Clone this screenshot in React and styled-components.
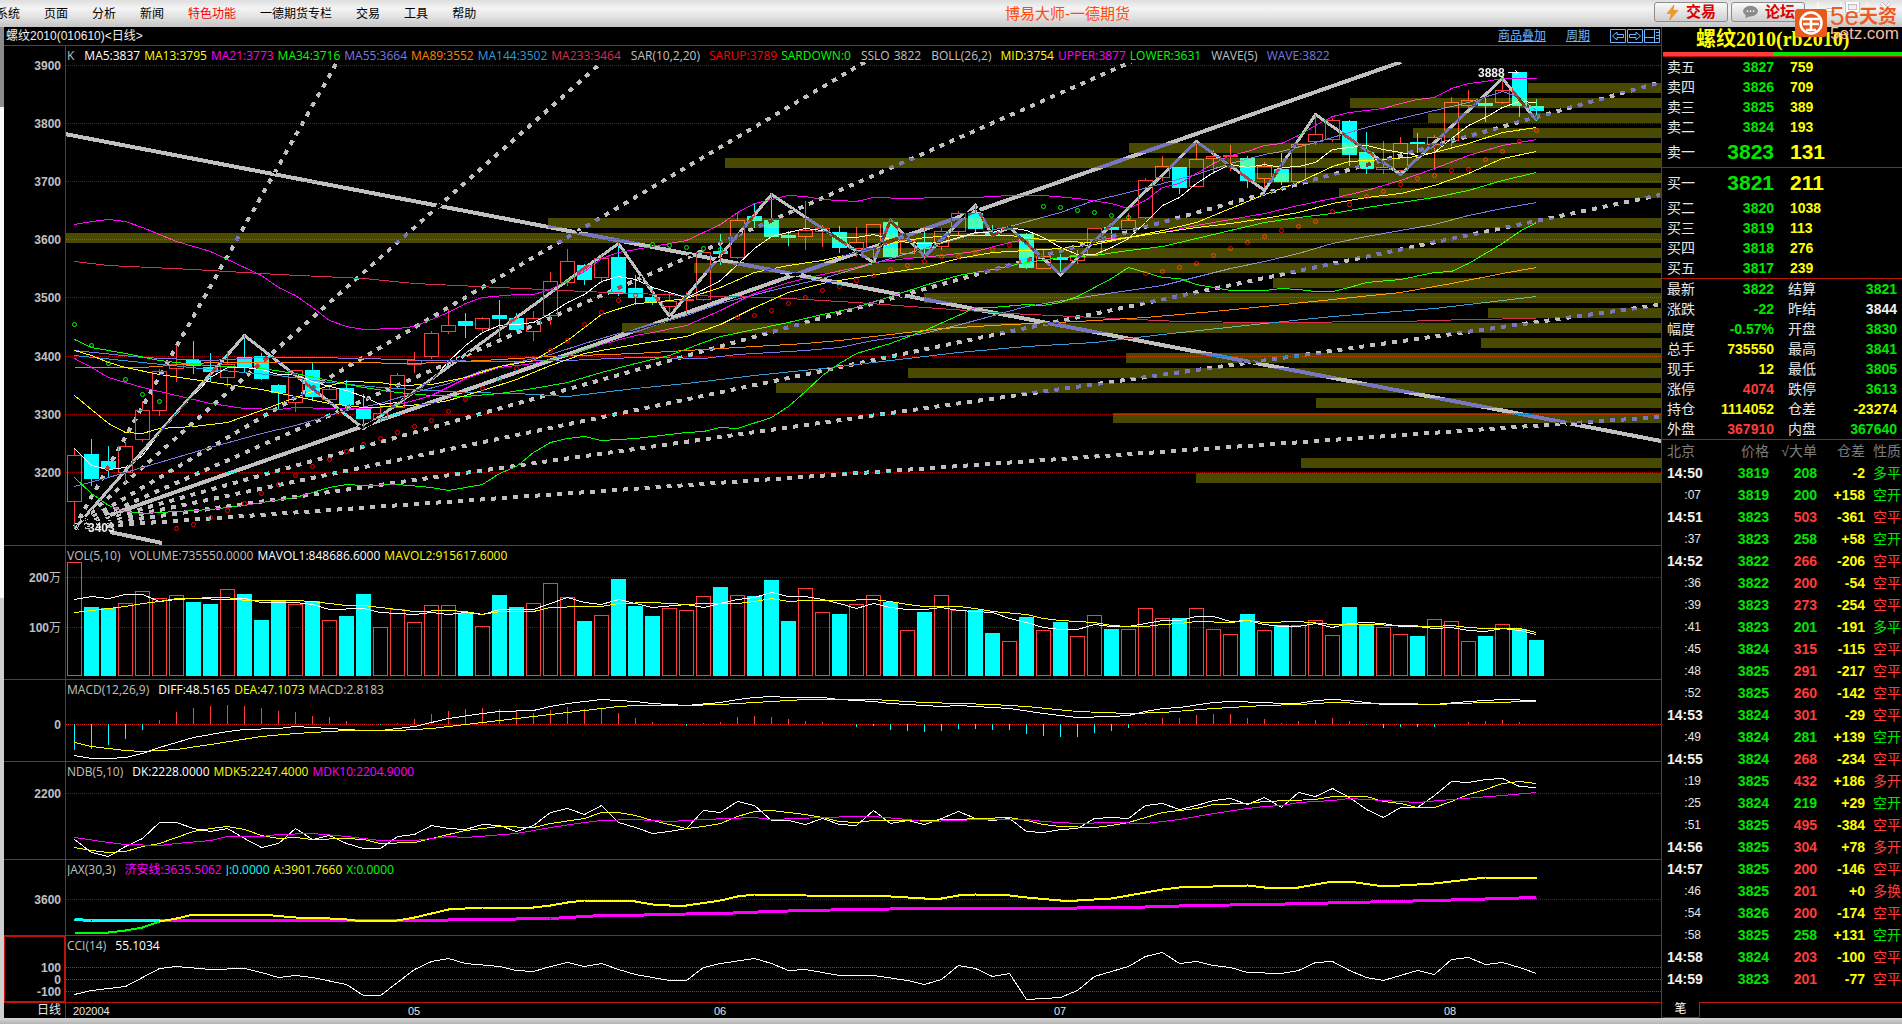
import React from "react";
import styled, { createGlobalStyle } from "styled-components";

const CJK = '"Liberation Sans", "Noto Sans CJK SC", sans-serif';
const INFO = '"Open Sans", "Noto Sans CJK SC", sans-serif';

const C = {
  rule: "#c0140a",
  up: "#ff3c3c",
  down: "#00ffff",
  green: "#00e600",
  lime: "#00ff00",
  yellow: "#ffff00",
  magenta: "#ff00ff",
  blue: "#7878e6",
  orange: "#ff8000",
  azure: "#309cd8",
  crimson: "#d82c50",
  grey: "#c0c0c0",
  white: "#ffffff",
  red: "#ff0000",
};

const GlobalStyle = createGlobalStyle`
  * { box-sizing: border-box; }
  body { margin: 0; background: #000; overflow-x: hidden; font-family: ${CJK}; }
`;

/* ---------- shell ---------- */
const Page = styled.div`
  position: relative;
  display: flex;
  flex-direction: column;
  min-height: 100vh;
  background: #000;
`;
const MenuBar = styled.header`
  display: flex;
  align-items: center;
  height: 27px;
  overflow: hidden;
  background: linear-gradient(#dedede 0, #f4f4f4 30%, #e4e4e4 60%, #c4c4c4 100%);
`;
const Menu = styled.nav`
  display: flex;
  gap: 24px;
  margin-left: -4px;
`;
const MenuItem = styled.button`
  padding: 0;
  border: 0;
  background: none;
  font: 12px/18px ${CJK};
  white-space: nowrap;
  color: ${(p) => (p.$hot ? C.red : "#000")};
`;
const AppTitle = styled.h1`
  flex: 1;
  margin: 0;
  padding-left: 5px;
  text-align: center;
  font: 15px/24px ${CJK};
  color: #ff4a10;
`;
const BarActions = styled.div`
  display: flex;
  gap: 3px;
  height: 27px;
  padding-top: 2px;
`;
const ActionButton = styled.button`
  display: flex;
  align-items: center;
  gap: 7px;
  width: 74px;
  height: 20px;
  padding: 0 9px 0 11px;
  border: 1px solid #8c8c8c;
  border-radius: 3px;
  background: linear-gradient(#fafafa, #cfcfcf);
  font: bold 15px/18px ${CJK};
  color: #dc0000;
  white-space: nowrap;
`;
const WindowButtons = styled.svg`
  display: block;
  width: 94px;
  height: 24px;
`;
const Brand = styled.div`
  position: absolute;
  top: 6px;
  right: 0;
  display: flex;
  gap: 2px;
  width: 107px;
`;
const BrandMark = styled.svg`
  flex: none;
  width: 33px;
  height: 34px;
`;
const BrandText = styled.div`
  color: #f05a22;
  white-space: nowrap;
`;
const BrandTop = styled.div`
  display: flex;
  align-items: center;
  height: 21px;
  font: 26px/21px ${CJK};
  b {
    font-size: 19px;
  }
`;
const BrandBottom = styled.div`
  font: 17px/14px ${CJK};
  color: #f4bca8;
`;

const Workspace = styled.main`
  flex: 1;
  display: grid;
  grid-template-columns: 4px minmax(0, 1fr) 240px;
`;
const Gutter = styled.div`
  background: linear-gradient(#8c8c8c 0 80px, #fafaf6 80px 571px, #cfcfcf 571px);
`;
const StatusStrip = styled.footer`
  height: 6px;
  background: linear-gradient(#d6d6d6, #b4b4b4);
`;

/* ---------- chart column ---------- */
const ChartColumn = styled.section`
  display: flex;
  flex-direction: column;
  border-right: 1px solid ${C.rule};
`;
const ChartHeader = styled.div`
  display: flex;
  align-items: center;
  height: 19px;
  padding: 0 1px 0 2px;
  border-bottom: 1px solid ${C.rule};
  font: 12px/18px ${CJK};
  color: #f0f0f0;
`;
const HeaderLinks = styled.div`
  display: flex;
  align-items: center;
  gap: 20px;
  margin-left: auto;
`;
const HeaderLink = styled.a`
  color: #6cb4ff;
  text-decoration: underline;
`;
const HeaderIcons = styled.svg`
  display: block;
  width: 50px;
  height: 16px;
`;
const Panel = styled.div`
  display: grid;
  grid-template-columns: 62px minmax(0, 1fr);
  grid-template-rows: minmax(0, 1fr);
  height: ${(p) => p.$h}px;
  border-bottom: 1px solid ${C.rule};
`;
const AxisCell = styled.div`
  min-height: 0;
  border-right: 1px solid ${C.rule};
  box-shadow: ${(p) => (p.$active ? `inset 0 0 0 1px ${C.rule}` : "none")};
`;
const AxisSvg = styled.svg`
  display: block;
  width: 61px;
  height: 100%;
  font: bold 12px ${CJK};
  fill: ${C.grey};
`;
const PlotCell = styled.div`
  display: flex;
  flex-direction: column;
  min-width: 0;
  min-height: 0;
`;
const InfoRow = styled.div`
  display: flex;
  flex: none;
  gap: 4px;
  height: 16px;
  padding-left: 1px;
  font: 12px/20px ${INFO};
  white-space: nowrap;
`;
const Info = styled.span`
  color: ${(p) => p.$c};
  margin-left: ${(p) => (p.$lead ? 6 : 0)}px;
  margin-right: ${(p) => (p.$name ? 5 : 0)}px;
`;
const PlotFrame = styled.div`
  flex: 1;
  min-height: 0;
  overflow: hidden;
`;
const PlotSvg = styled.svg`
  display: block;
  width: 100%;
  height: 100%;
  isolation: isolate;
  shape-rendering: crispEdges;
  font: bold 12px ${CJK};
`;
const DrawnLine = styled.path`
  fill: none;
  stroke: ${C.grey};
  stroke-width: ${(p) => p.$w}px;
  stroke-dasharray: ${(p) => (p.$dash ? "5 6" : "none")};
  mix-blend-mode: difference;
`;
const TimeRow = styled.div`
  display: grid;
  grid-template-columns: 62px minmax(0, 1fr);
  height: 15px;
  font: 11px/15px ${CJK};
  color: #e6e6e6;
`;
const Period = styled.div`
  border-right: 1px solid ${C.rule};
  padding-right: 4px;
  text-align: right;
  font-size: 12px;
`;
const TimeSvg = styled.svg`
  display: block;
  width: 100%;
  height: 15px;
  fill: #e6e6e6;
`;

/* ---------- quote column ---------- */
const QuoteColumn = styled.aside`
  display: flex;
  flex-direction: column;
  font: bold 14px/20px ${CJK};
`;
const Contract = styled.h2`
  margin: 0;
  height: 25px;
  padding-left: 34px;
  font: bold 20px/25px "Liberation Serif", "Noto Sans CJK SC", serif;
  color: ${C.yellow};
  white-space: nowrap;
`;
const Ratio = styled.div`
  height: 5px;
  margin-left: 1px;
  border-bottom: 1px solid ${C.rule};
  background: linear-gradient(to right, ${C.up} 46%, ${C.green} 46%);
`;
const QuoteTable = styled.table`
  width: 100%;
  table-layout: fixed;
  border-collapse: separate;
  border-spacing: 0;
  border-bottom: ${(p) => (p.$rule ? `1px solid ${C.rule}` : "0")};
`;
const Row = styled.tr`
  height: ${(p) => p.$h}px;
`;
const Label = styled.th`
  width: ${(p) => p.$w}px;
  padding: 0 0 0 ${(p) => p.$pl || 5}px;
  text-align: left;
  font-weight: normal;
  white-space: nowrap;
  color: #e6e6e6;
`;
const Cell = styled.td`
  width: ${(p) => (p.$w ? `${p.$w}px` : "auto")};
  padding: 0 ${(p) => p.$pr || 0}px 0 ${(p) => p.$pl || 0}px;
  text-align: ${(p) => (p.$left ? "left" : "right")};
  font-size: ${(p) => (p.$big ? 21 : 14)}px;
  white-space: nowrap;
  color: ${(p) => p.$c};
`;
const HeadCell = styled.th`
  width: ${(p) => p.$w}px;
  padding: 0 0 0 ${(p) => p.$pl || 0}px;
  text-align: ${(p) => (p.$left ? "left" : "right")};
  font-weight: normal;
  white-space: nowrap;
  color: #7c7c7c;
`;
const Minute = styled.td`
  padding: 0 0 0 5px;
  color: #f0f0f0;
`;
const Second = styled.td`
  padding: 0 9px 0 0;
  text-align: right;
  font-size: 12px;
  font-weight: normal;
  color: #e6e6e6;
`;
const Nature = styled.td`
  padding: 0 0 0 8px;
  font-weight: normal;
  white-space: nowrap;
  overflow: hidden;
  color: ${(p) => p.$c};
`;
const TabRow = styled.div`
  display: flex;
  height: 16px;
  margin-top: auto;
`;
const Tab = styled.button`
  width: 38px;
  height: 16px;
  padding: 0;
  border: 1px solid ${C.rule};
  border-width: 0 1px 1px 0;
  border-radius: 0 0 2px 2px;
  background: #000;
  font: 12px/15px ${CJK};
  color: #fff;
`;
const TabRest = styled.div`
  flex: 1;
  border-top: 1px solid ${C.rule};
`;

/* ---------- data ---------- */
/* kind, high, body top, body bottom, low */
const CANDLES = `r 449 455 501 528|c 439 454 479 486|c 446 461 469 477|r 442 446 472 483|r 401 410 439 442|r 369 371 410 416|r 345 364 368 382|c 341 360 366 374|c 353 367 372 381|r 351 364 377 387|c 335 357 367 372|c 353 356 379 380|c 384 385 393 409|r 370 370 402 412|c 363 370 397 399|r 386 389 399 400|c 380 388 405 410|c 394 409 419 429|r 403 413 418 422|r 373 375 407 407|r 352 360 364 373|r 331 333 356 359|r 309 325 331 334|c 313 321 326 338|r 317 318 328 332|c 300 315 319 337|c 313 318 330 332|r 311 318 331 341|r 272 281 315 325|r 249 261 282 286|c 264 265 280 285|r 255 258 277 283|c 243 257 294 296|c 275 288 298 305|c 287 297 302 305|r 292 301 306 315|r 292 299 300 314|r 251 252 299 301|c 234 251 254 265|r 212 220 257 259|c 203 216 221 228|c 193 220 237 237|c 231 235 238 246|r 201 230 236 250|r 225 228 231 247|c 226 232 248 253|r 227 242 248 257|r 224 224 248 263|c 219 222 257 257|r 240 240 253 253|c 228 242 249 256|r 228 231 246 250|r 211 213 231 235|c 205 213 229 232|c 225 232 235 237|r 226 228 229 230|c 233 234 268 269|r 250 256 268 268|c 254 258 260 274|r 250 255 260 264|r 228 228 254 254|c 225 227 230 239|r 213 220 229 229|r 178 180 217 219|r 156 166 177 181|c 167 167 188 194|r 142 159 186 186|r 150 156 158 174|r 145 155 156 171|c 156 158 181 188|r 162 166 178 188|c 153 169 182 185|r 144 144 181 184|r 115 134 141 145|r 118 120 139 142|c 120 121 155 166|c 132 152 169 174|r 141 167 169 174|r 137 143 170 173|c 133 142 144 153|r 135 137 144 170|r 97 102 140 146|r 90 100 105 109|c 96 103 106 122|r 78 90 102 104|c 72 72 106 117|c 99 106 111 121`
  .split("|")
  .map((s) => {
    const [kind, ...v] = s.split(" ");
    return [kind, ...v.map(Number)];
  });

/* "index:y index:y ..." */
const pts = (s, f = (v) => v) =>
  s.trim().split(/\s+/).map((p) => {
    const [i, v] = p.split(":").map(Number);
    return [i, f(v)];
  });
const run = (start, s) => s.split(" ").map((v, k) => [start + k, Number(v)]);

const LINES = [
  [C.crimson, "0:261 2:265 7:269 12:274 17:278 20:283 25:287 30:291 33:293 36:295 41:297 46:302 50:307 55:313 60:317 65:321 70:322 78:321 82:319 86:318"],
  [C.azure, "0:355 4:362 8:369 12:375 15:382 18:387 20:389 23:392 26:393 29:396 33:388 36:383 40:375 44:368 48:360 52:352 56:346 60:342 64:334 70:323 74:316 80:308 83:302 86:296"],
  [C.orange, "0:367 4:367 8:362 12:362 16:362 20:363 24:360 28:356 33:353 38:348 43:343 45:340 47:336 51:328 55:324 59:321 63:317 67:311 70:306 74:299 78:292 81:283 84:273 86:267"],
  [C.blue, "0:350 4:357 8:360 11:357 14:357 17:358 21:360 25:361 29:360 33:357 37:358 39:354 43:350 45:347 47:340 50:333 53:320 56:306 60:295 64:285 68:268 70:261 72:253 74:243 76:236 78:230 80:224 82:215 84:208 86:202"],
  [C.blue, "0:486 2:477 5:462 8:447 11:433 13:425 15:415 16:410 18:403 20:392 22:383 24:370 26:362 28:354 30:343 32:333 33:330 34:325 36:315 38:303 41:290 44:278 47:263 50:248 53:233 55:226 58:212 60:200 62:192 64:183 66:174 68:163 70:154 71:151 73:142 74:137 76:127 78:118 80:110 82:102 84:91 85:97 86:110"],
  [C.lime, "0:339 1:347 3:353 5:360 7:364 9:366 11:368 13:373 15:380 17:387 19:392 21:395 23:396 25:393 27:388 29:382 31:372 33:363 35:355 37:342 38:336 40:329 42:322 44:314 46:307 48:296 50:285 52:275 54:269 56:262 58:257 60:255 62:250 64:246 66:238 68:230 70:222 72:217 74:213 76:207 78:202 80:197 82:190 84:180 86:172"],
  [C.lime, "0:477 1:493 2:505 3:511 4:513 6:511 8:509 10:505 11:502 13:497 15:487 16:484 17:485 19:484 21:487 22:490 24:484 25:473 26:466 27:452 28:442 29:438 30:436 31:440 33:438 36:432 37:431 38:427 39:428 41:417 42:406 43:391 44:375 45:363 46:353 48:343 50:330 52:315 53:307 54:307 56:304 57:305 58:302 59:296 60:287 61:278 62:267 63:272 64:277 65:278 66:284 67:287 68:290 70:290 71:288 72:289 73:291 74:291 75:287 76:282 78:279 80:272 81:271 82:263 83:253 84:243 85:231 86:222"],
  [C.magenta, "0:358 1:367 2:377 4:387 6:395 8:403 10:408 12:409 13:407 15:408 17:408 18:407 19:404 20:400 21:395 23:378 25:367 27:363 29:355 31:344 33:335 34:332 36:325 38:310 40:293 42:282 44:274 46:267 47:262 49:258 51:255 53:251 55:242 56:239 58:239 60:239 62:237 64:232 66:225 68:219 70:213 72:205 74:198 76:190 78:180 80:168 82:155 84:145 86:139"],
  [C.magenta, "0:224 1:221 2:219 3:221 4:227 6:241 8:251 10:267 11:275 12:287 13:295 14:307 15:320 16:326 17:329 19:328 20:326 21:319 22:312 23:303 24:297 26:294 27:294 28:289 29:280 30:271 31:258 32:252 33:249 34:246 36:240 37:232 38:224 39:212 40:203 41:199 42:195 43:196 44:199 46:201 47:197 49:198 51:197 53:197 55:195 57:195 59:198 61:203 62:208 63:200 64:187 65:183 66:173 67:163 68:155 69:151 70:145 71:143 72:135 73:125 74:116 75:112 77:108 78:103 79:99 80:97 81:88 82:83 83:81 84:78 85:78 86:78"],
  [C.yellow, "0:350 1:355 2:362 3:367 5:374 7:379 9:384 11:389 13:396 15:403 17:407 19:406 21:403 22:400 23:395 24:390 26:379 28:365 30:353 32:347 33:344 36:336 38:324 40:307 42:292 44:283 46:277 48:272 50:267 52:258 54:252 56:250 58:248 60:244 62:237 64:232 66:227 68:223 70:218 72:212 74:203 76:197 78:193 80:185 82:173 84:158 86:151"],
  [C.yellow, "0:395 2:423 3:432 4:433 5:428 7:426 9:422 11:410 13:397 15:385 16:381 18:382 19:385 21:384 23:377 25:366 27:360 28:350 29:340 30:327 31:314 33:303 34:302 36:298 38:287 40:272 42:265 44:260 46:252 48:243 50:237 52:235 54:235 55:235 56:237 58:241 60:242 62:237 64:230 66:222 68:208 70:194 72:182 74:166 75:161 77:159 79:156 80:152 82:143 84:132 86:127"],
  [C.white, "0:448 1:465 2:469 3:467 4:455 5:433 6:413 7:395 8:377 9:367 10:367 11:369 12:374 13:374 14:381 15:386 16:390 17:396 18:404 19:402 20:392 21:380 22:361 23:345 24:332 25:325 26:324 27:322 28:313 29:302 30:294 31:281 32:276 33:279 34:287 35:292 36:297 37:289 38:280 39:264 40:248 41:236 42:232 43:228 44:230 45:237 46:237 47:234 48:239 49:242 50:243 51:242 52:237 53:232 54:232 55:227 56:230 57:237 58:247 59:254 60:254 61:247 62:238 63:222 64:205 65:197 66:183 67:172 68:164 69:167 70:164 71:167 72:166 73:162 74:149 75:147 76:145 77:149 78:152 79:155 80:152 81:138 82:125 83:117 84:107 85:101 86:102"],
];

const SAR = [
  [C.lime, run(0, "324 345 363 379 394 401")],
  [C.red, run(6, "528 524 517 510 503 493 484 475 466 459 451 444 438 432 426 420 411 399 388 379 368 358 350 340 324 312 300 295")],
  [C.lime, run(34, "244 245 247 248 249")],
  [C.red, run(39, "317 315 310 303 297 290 286 280 275 269 265 261 256 256 252 249 245 242")],
  [C.lime, run(57, "206 207 210 212 215 217")],
  [C.red, run(63, "273 271 267 263 255 248 242 236 230 226 221 211 204 196 191 184 178 175 170 169 159 151 141 130")],
];

/* top, left edge of each price-volume band */
const BANDS = [[83, 1528], [98, 1350], [113, 1428], [128, 1413], [143, 1129], [158, 725], [173, 1255], [188, 1339], [218, 548], [233, 66], [248, 861], [263, 694], [278, 1273], [293, 924], [308, 1488], [323, 622], [338, 1481], [353, 1126], [368, 908], [383, 776], [398, 1316], [413, 1113], [458, 1301], [473, 1196]];

const FAN = [[336, 64], [602, 62], [865, 62], [1131, 62], [1658, 83], [1660, 195], [1658, 305], [1660, 417]];
const WAVE = "0:528 10:335 17:428 32:243 35:316 41:194 47:262 48:220 50:256 53:205 54:235 55:227 58:274 66:141 70:190 73:114 78:174 84:78 86:120";

const VOL_TOPS = "562 607 608 603 591 598 595 602 604 589 594 620 601 604 601 620 616 594 627 609 622 605 605 613 626 595 607 603 583 597 621 615 579 606 616 608 610 596 587 595 596 580 621 588 612 614 604 595 602 630 612 595 610 610 633 641 617 630 622 636 615 629 629 608 618 618 608 629 634 614 630 625 625 620 635 607 625 627 634 636 619 621 641 636 624 629 640".split(" ").map(Number);
const MACD_ENDS = "629 627 615 597 570 540 516 504 498 495 498 504 513 516 528 531 543 551 555 549 537 522 513 507 504 507 513 519 510 501 507 504 519 534 546 552 558 549 546 531 528 531 537 543 546 552 561 558 570 573 576 573 567 567 570 570 582 588 591 591 579 573 564 549 534 534 525 522 522 534 537 549 543 540 534 543 555 564 561 561 561 553 546 543 540 546 552".split(" ").map(Number);

/* indicator samples are stored in thirds of a pixel below the volume baseline row */
const third = (v) => 540 + v / 3;
const MAVOL = [
  [C.white, "0:178 1:169 2:175 3:163 4:163 5:184 6:178 7:175 9:176 10:173 11:187 13:186 14:193 15:208 17:203 18:217 20:223 21:217 22:223 23:216 24:223 25:208 27:208 28:190 29:172 30:187 31:193 32:178 33:190 34:202 36:193 37:202 38:190 39:178 40:172 41:155 42:169 43:169 44:178 45:190 46:205 47:190 48:200 49:208 50:208 51:202 52:211 54:217 55:235 56:247 57:260 58:268 59:268 60:253 61:259 62:259 63:250 64:241 65:241 66:229 67:229 68:244 69:241 70:252 71:259 72:259 73:250 74:262 75:250 76:247 77:250 78:259 79:259 80:265 81:262 82:271 83:274 84:265 85:271 86:283"],
  [C.yellow, "0:217 2:205 3:199 4:190 5:182 6:173 7:175 8:170 9:170 10:179 11:181 13:181 14:184 15:190 16:196 17:194 18:202 20:214 22:211 23:214 24:223 25:213 27:213 28:202 30:197 31:199 32:190 34:187 36:193 37:190 39:190 40:184 41:173 42:184 43:181 45:180 47:178 48:184 49:193 50:199 52:199 53:205 54:214 56:223 57:235 58:241 60:245 61:254 62:259 63:259 64:253 65:248 66:244 68:247 69:241 70:247 72:244 74:253 76:253 78:256 80:258 81:256 82:262 83:265 85:265 86:275"],
];
const MACD_LINES = [
  [C.white, "0:646 1:655 2:655 3:652 4:640 5:622 6:607 7:592 9:574 10:568 12:565 13:559 16:566 17:571 18:571 20:559 21:547 22:535 24:520 25:514 27:511 28:499 29:490 31:478 33:484 34:490 36:495 38:487 39:478 40:472 41:469 42:472 44:472 45:478 47:482 48:490 51:499 52:496 55:505 57:520 59:532 61:527 62:526 63:514 64:505 65:502 67:487 68:484 70:487 71:490 72:488 73:481 74:478 75:481 77:493 80:493 82:484 84:478 86:481"],
  [C.yellow, "0:607 1:619 3:631 4:634 6:626 8:613 11:589 13:580 16:571 19:571 21:565 23:553 26:535 29:517 32:499 33:496 36:496 38:493 41:484 43:478 47:478 50:487 54:493 56:499 59:514 62:520 64:517 67:505 70:496 72:493 74:487 76:488 78:490 80:491 83:487 86:484"],
];
const NDB_LINES = [
  [C.white, "0:898 1:935 2:949 3:919 4:895 5:847 6:847 7:865 8:874 9:865 10:895 11:922 12:910 13:865 14:898 15:886 16:910 17:925 18:925 19:889 20:883 21:856 22:865 23:868 24:853 25:856 26:874 27:856 28:817 29:805 30:821 31:794 32:847 33:862 34:880 35:874 36:865 37:811 38:817 39:784 40:796 41:841 42:841 43:853 44:835 45:853 46:856 47:811 48:850 49:841 50:853 51:835 52:814 53:835 54:841 55:835 56:874 57:877 58:868 59:865 60:835 61:832 62:835 63:796 64:790 65:808 66:796 67:781 68:775 69:793 70:772 71:802 72:757 73:769 74:745 75:772 76:808 77:832 78:802 79:802 80:766 81:724 82:727 83:718 84:715 85:738 86:742"],
  [C.yellow, "0:922 1:931 2:937 3:934 4:919 5:910 6:892 7:874 8:865 9:859 10:868 11:886 12:895 13:892 14:898 16:895 17:898 18:910 20:907 21:895 22:883 23:871 25:859 27:862 28:850 30:835 31:817 32:817 33:826 34:841 35:853 36:865 37:859 38:850 39:829 40:814 41:811 43:823 44:832 45:844 46:847 47:841 50:841 55:832 56:841 57:853 58:859 60:862 61:856 62:847 63:832 64:817 65:811 66:805 67:793 69:790 70:784 73:778 74:769 76:769 77:784 78:790 79:802 80:802 81:784 82:763 83:748 84:730 85:724 86:730"],
  [C.magenta, "0:892 2:907 3:913 5:916 6:910 8:901 9:889 11:889 12:883 14:880 16:889 18:901 20:901 22:889 23:892 26:880 28:862 30:847 31:841 33:838 35:844 37:838 40:832 41:838 44:832 46:829 47:829 49:838 50:844 52:841 53:838 56:838 57:844 59:850 61:847 63:848 65:838 67:820 69:805 70:799 71:796 72:787 74:781 75:775 77:781 79:787 81:778 84:766 86:757"],
];
const JAX_LINES = [
  [C.down, "0:1138 1:1141 5:1141", 3],
  [C.magenta, "5:1141 20:1141 24:1137 28:1133 31:1126 33:1126 34:1123 38:1120 41:1114 43:1110 46:1108 50:1105 56:1103 62:1102 66:1096 70:1093 75:1085 80:1081 84:1074 86:1072", 3],
  [C.lime, "0:1176 2:1176 3:1171 4:1162 5:1143", 2],
  [C.yellow, "5:1143 6:1133 7:1123 11:1123 13:1130 15:1133 16:1137 17:1142 19:1141 20:1132 21:1118 22:1108 24:1102 27:1101 28:1096 29:1087 30:1081 32:1080 33:1084 34:1091 35:1095 36:1095 38:1081 39:1069 40:1062 42:1062 43:1065 48:1068 50:1074 51:1073 52:1066 53:1062 55:1066 56:1072 58:1080 59:1080 61:1073 62:1066 64:1048 65:1042 67:1038 69:1034 70:1040 72:1040 74:1023 75:1023 77:1038 80:1030 83:1012 84:1010 86:1010", 2],
];
const CCI_LINES = [
  [C.white, "0:1363 1:1351 3:1339 4:1312 5:1285 6:1279 8:1288 10:1285 11:1297 12:1312 13:1306 14:1312 16:1333 17:1366 18:1366 19:1325 20:1288 21:1264 22:1255 23:1270 25:1279 26:1291 27:1294 28:1279 29:1267 30:1279 31:1270 32:1288 33:1303 35:1321 36:1321 37:1282 38:1270 40:1255 41:1270 42:1291 43:1288 45:1306 47:1306 49:1321 50:1333 51:1318 52:1276 53:1285 54:1309 55:1300 56:1378 58:1372 59:1351 60:1309 61:1294 62:1279 63:1249 64:1237 65:1270 66:1264 67:1276 68:1282 69:1297 71:1300 72:1291 73:1267 74:1264 75:1291 76:1312 77:1321 79:1291 80:1303 81:1258 82:1252 83:1273 84:1267 85:1282 86:1300"],
];

const BOOK = [
  ["卖五", 3827, 759], ["卖四", 3826, 709], ["卖三", 3825, 389], ["卖二", 3824, 193], ["卖一", 3823, 131, true],
];
const BIDS = [
  ["买一", 3821, 211, true], ["买二", 3820, 1038], ["买三", 3819, 113], ["买四", 3818, 276], ["买五", 3817, 239],
];
const STATS = [
  ["最新", "3822", C.green, "结算", "3821", C.green],
  ["涨跌", "-22", C.green, "昨结", "3844", "#f0f0f0"],
  ["幅度", "-0.57%", C.green, "开盘", "3830", C.green],
  ["总手", "735550", C.yellow, "最高", "3841", C.green],
  ["现手", "12", C.yellow, "最低", "3805", C.green],
  ["涨停", "4074", C.up, "跌停", "3613", C.green],
  ["持仓", "1114052", C.yellow, "仓差", "-23274", C.yellow],
  ["外盘", "367910", C.up, "内盘", "367640", C.green],
];
const TICKS = `14:50 3819 208 -2 多平 g|:07 3819 200 +158 空开 g|14:51 3823 503 -361 空平 r|:37 3823 258 +58 空开 g|14:52 3822 266 -206 空平 r|:36 3822 200 -54 空平 r|:39 3823 273 -254 空平 r|:41 3823 201 -191 多平 g|:45 3824 315 -115 空平 r|:48 3825 291 -217 空平 r|:52 3825 260 -142 空平 r|14:53 3824 301 -29 空平 r|:49 3824 281 +139 空开 g|14:55 3824 268 -234 空平 r|:19 3825 432 +186 多开 r|:25 3824 219 +29 空开 g|:51 3825 495 -384 空平 r|14:56 3825 304 +78 多开 r|14:57 3825 200 -146 空平 r|:46 3825 201 +0 多换 r|:54 3826 200 -174 空平 r|:58 3825 258 +131 空开 g|14:58 3824 203 -100 空平 r|14:59 3823 201 -77 空平 r`
  .split("|")
  .map((s) => s.split(" "));

/* ---------- chart pieces ---------- */
const X0 = 66;
const xAt = (i) => 74.5 + 17 * i;

const toPath = (list) => "M" + list.map(([i, y]) => `${xAt(i)} ${Math.round(y) + 0.5}`).join("L");

function Curves({ lines, f }) {
  return lines.map(([color, s, w], k) => (
    <path key={k} d={toPath(pts(s, f))} fill="none" stroke={color} strokeWidth={w || 1} />
  ));
}

function Grid({ ys, bright }) {
  return ys.map((y) => (
    <line key={y} x1={X0} x2="110%" y1={y + 0.5} y2={y + 0.5} stroke={bright ? "#e01c0c" : "#a80000"} strokeDasharray="1 1" />
  ));
}

function Candle({ i, data }) {
  const [kind, hi, top, bottom, lo] = data;
  const x = xAt(i);
  if (kind === "c") {
    return (
      <g fill={C.down}>
        <rect x={x - 0.5} y={hi} width="1" height={lo - hi} />
        <rect x={x - 7.5} y={top} width="15" height={bottom - top} />
      </g>
    );
  }
  return (
    <g fill="none" stroke={C.up}>
      <path d={`M${x} ${hi}V${top}M${x} ${bottom}V${lo}`} />
      <rect x={x - 7} y={top + 0.5} width="14" height={bottom - top} />
    </g>
  );
}

function ChartPanel({ top, height, labels, info, active, children }) {
  return (
    <Panel $h={height + 1}>
      <AxisCell $active={active}>
        <AxisSvg>
          {labels.map(([text, y]) => (
            <text key={text} x="57" y={y - top + 5} textAnchor="end">
              {text.replace("万", "")}
              {text.includes("万") && <tspan fontWeight="normal">万</tspan>}
            </text>
          ))}
        </AxisSvg>
      </AxisCell>
      <PlotCell>
        <InfoRow>
          {info.map(([text, color, lead]) => (
            <Info key={text} $c={color} $lead={lead} $name={text.endsWith(")")}>{text}</Info>
          ))}
        </InfoRow>
        <PlotFrame>
          <PlotSvg>
            <rect width="100%" height="100%" fill="#000" />
            <g transform={`translate(${-X0} ${-(top + 16)})`}>{children}</g>
          </PlotSvg>
        </PlotFrame>
      </PlotCell>
    </Panel>
  );
}

function PricePlot() {
  return (
    <>
      <Grid ys={[65, 123, 181, 239, 297, 356, 414, 472]} />
      {CANDLES.map((c, i) => <Candle key={i} i={i} data={c} />)}
      <Curves lines={LINES} />
      {SAR.map(([color, list], k) => (
        <g key={k} fill="none" stroke={color} shapeRendering="auto">
          {list.map(([i, y]) => <ellipse key={i} cx={xAt(i)} cy={y + 0.5} rx="2" ry="2" />)}
        </g>
      ))}
      <g fill="#ffff00" fillOpacity="0.285">
        {BANDS.map(([y, x]) => <rect key={y} x={x} y={y} width="100%" height="10" />)}
      </g>
      <DrawnLine $w={4} d="M65 134L1661 441" />
      <DrawnLine $w={4} d="M110 515L1401 62" />
      <DrawnLine $w={4} d="M110 532L162 543" />
      {FAN.map(([x, y]) => <DrawnLine key={`${x}-${y}`} $w={4} $dash d={`M74 528L${x} ${y}`} />)}
      <DrawnLine $w={3} d={toPath(pts(WAVE))} />
      <g fill="#f0f0f0">
        <text x="88" y="532">3403</text>
        <text x="1478" y="77">3888</text>
      </g>
      <path d="M1508 72.500H1518M1515 70.500L1518 72.500L1515 74.500" fill="none" stroke="#f0f0f0" />
    </>
  );
}

function VolumePlot() {
  return (
    <>
      <Grid ys={[577, 627]} />
      {VOL_TOPS.map((y, i) =>
        CANDLES[i][0] === "c" ? (
          <rect key={i} x={xAt(i) - 7.5} y={y} width="15" height={676 - y} fill={C.down} />
        ) : (
          <rect key={i} x={xAt(i) - 7} y={y + 0.5} width="14" height={675 - y} fill="none" stroke={C.up} />
        )
      )}
      <Curves lines={MAVOL} f={third} />
    </>
  );
}

function MacdPlot() {
  return (
    <>
      <Grid ys={[724]} bright />
      {MACD_ENDS.map((v, i) => (
        <line key={i} x1={xAt(i)} x2={xAt(i)} y1="724" y2={Math.round(third(v))} stroke={v > 553 ? C.down : C.up} />
      ))}
      <Curves lines={MACD_LINES} f={third} />
    </>
  );
}

function BookRows({ rows }) {
  return rows.map(([label, price, vol, big]) => (
    <Row key={label} $h={big ? 30 : 20}>
      <Label scope="row" $w={50}>{label}</Label>
      <Cell $w={62} $c={C.green} $big={big}>{price}</Cell>
      <Cell $c={C.yellow} $big={big} $left $pl={16}>{vol}</Cell>
    </Row>
  ));
}

const MENU = ["系统", "页面", "分析", "新闻", "特色功能", "一德期货专栏", "交易", "工具", "帮助"];

export default function App() {
  return (
    <Page>
      <GlobalStyle />
      <MenuBar>
        <Menu>
          {MENU.map((m) => <MenuItem key={m} type="button" $hot={m === "特色功能"}>{m}</MenuItem>)}
        </Menu>
        <AppTitle>博易大师-一德期货</AppTitle>
        <BarActions>
          <ActionButton type="button">
            <svg width="13" height="15" viewBox="0 0 13 15" aria-hidden="true">
              <path d="M8 0L1 8.500H5.500L3.500 15L12 5.500H7Z" fill="#f59a1c" stroke="#d97a10" strokeWidth=".5" />
            </svg>
            交易
          </ActionButton>
          <ActionButton type="button">
            <svg width="17" height="14" viewBox="0 0 17 14" aria-hidden="true">
              <ellipse cx="8.500" cy="6" rx="8.500" ry="6" fill="#8a8a8a" />
              <path d="M3 9L3 14L9 11Z" fill="#8a8a8a" />
              <g fill="#fff"><circle cx="5" cy="6" r="1" /><circle cx="8.500" cy="6" r="1" /><circle cx="12" cy="6" r="1" /></g>
            </svg>
            论坛
          </ActionButton>
          <WindowButtons viewBox="0 0 94 24" aria-hidden="true">
            <path d="M10 -2V10M33 -2V10M59 -2V10" stroke="#fff" fill="none" />
            <g fill="none" stroke="#9a9a9a" strokeWidth="3"><path d="M18 8H27" /><path d="M39 1H50V9H39Z" /><path d="M73 1L82 10M82 1L73 10" /></g>
            <g fill="none" stroke="#fff" strokeWidth="2"><path d="M18 8H27" /><path d="M39 1H50V9H39Z" /><path d="M73 1L82 10M82 1L73 10" /></g>
          </WindowButtons>
        </BarActions>
      </MenuBar>

      <Workspace>
        <Gutter />
        <ChartColumn>
          <ChartHeader>
            螺纹2010(010610)&lt;日线&gt;
            <HeaderLinks>
              <HeaderLink href="#overlay">商品叠加</HeaderLink>
              <HeaderLink href="#period">周期</HeaderLink>
              <HeaderIcons viewBox="0 0 50 16" aria-hidden="true">
                <g fill="none" stroke="#6cb4ff">
                  <path d="M.5 1.500H15.500V14.500H.5ZM17.500 1.500H32.500V14.500H17.500ZM34.500 1.500H49.500V14.500H34.500Z" />
                  <path d="M2.500 8L7 4V6.500H13.500V9.500H7V12Z" />
                  <path d="M30.500 8L26 4V6.500H19.500V9.500H26V12Z" />
                  <path d="M44.500 1.500V14.500M34.500 9.500H44.500M46 4.500H49M46 7.500H49M46 10.500H49" />
                </g>
              </HeaderIcons>
            </HeaderLinks>
          </ChartHeader>

          <ChartPanel
            top={46}
            height={499}
            labels={[["3900", 65], ["3800", 123], ["3700", 181], ["3600", 239], ["3500", 297], ["3400", 356], ["3300", 414], ["3200", 472]]}
            info={[
              ["K", C.grey], ["MA5:3837", C.white, true], ["MA13:3795", C.yellow], ["MA21:3773", C.magenta], ["MA34:3716", C.lime],
              ["MA55:3664", C.blue], ["MA89:3552", C.orange], ["MA144:3502", C.azure], ["MA233:3464", C.crimson],
              ["SAR(10,2,20)", C.grey, true], ["SARUP:3789", C.red], ["SARDOWN:0", C.lime], ["SSLO", C.grey, true], ["3822", C.grey],
              ["BOLL(26,2)", C.grey, true], ["MID:3754", C.yellow], ["UPPER:3877", C.magenta], ["LOWER:3631", C.lime],
              ["WAVE(5)", C.grey, true], ["WAVE:3822", C.blue],
            ]}
          >
            <PricePlot />
          </ChartPanel>

          <ChartPanel
            top={546}
            height={133}
            labels={[["200万", 577], ["100万", 627]]}
            info={[["VOL(5,10)", C.grey], ["VOLUME:735550.0000", C.grey], ["MAVOL1:848686.6000", C.white], ["MAVOL2:915617.6000", C.yellow]]}
          >
            <VolumePlot />
          </ChartPanel>

          <ChartPanel
            top={680}
            height={81}
            labels={[["0", 724]]}
            info={[["MACD(12,26,9)", C.grey], ["DIFF:48.5165", C.white], ["DEA:47.1073", C.yellow], ["MACD:2.8183", C.grey]]}
          >
            <MacdPlot />
          </ChartPanel>

          <ChartPanel
            top={762}
            height={97}
            labels={[["2200", 793]]}
            info={[["NDB(5,10)", C.grey], ["DK:2228.0000", C.white], ["MDK5:2247.4000", C.yellow], ["MDK10:2204.9000", C.magenta]]}
          >
            <Grid ys={[793]} />
            <Curves lines={NDB_LINES} f={third} />
          </ChartPanel>

          <ChartPanel
            top={860}
            height={75}
            labels={[["3600", 899]]}
            info={[["JAX(30,3)", C.grey], ["济安线:3635.5062", C.magenta], ["J:0.0000", C.down], ["A:3901.7660", C.yellow], ["X:0.0000", C.lime]]}
          >
            <Grid ys={[899]} />
            <Curves lines={JAX_LINES} f={third} />
          </ChartPanel>

          <ChartPanel
            top={936}
            height={66}
            active
            labels={[["100", 967], ["0", 979], ["-100", 991]]}
            info={[["CCI(14)", C.grey], ["55.1034", C.white]]}
          >
            <Grid ys={[967, 979, 991]} bright />
            <Curves lines={CCI_LINES} f={third} />
          </ChartPanel>

          <TimeRow>
            <Period>日线</Period>
            <TimeSvg>
              <text x="7" y="12">202004</text>
              <text x="342" y="12">05</text>
              <text x="648" y="12">06</text>
              <text x="988" y="12">07</text>
              <text x="1378" y="12">08</text>
            </TimeSvg>
          </TimeRow>
        </ChartColumn>

        <QuoteColumn>
          <Contract>螺纹2010(rb2010)</Contract>
          <Ratio />
          <QuoteTable $rule><tbody><BookRows rows={BOOK} /></tbody></QuoteTable>
          <QuoteTable $rule><tbody><BookRows rows={BIDS} /></tbody></QuoteTable>
          <QuoteTable $rule>
            <tbody>
              {STATS.map(([a, b, c, d, e, f]) => (
                <Row key={a} $h={20}>
                  <Label scope="row" $w={50}>{a}</Label>
                  <Cell $w={62} $c={c}>{b}</Cell>
                  <Label scope="row" $w={50} $pl={14}>{d}</Label>
                  <Cell $c={f} $pr={5}>{e}</Cell>
                </Row>
              ))}
            </tbody>
          </QuoteTable>
          <QuoteTable>
            <thead>
              <Row $h={22}>
                <HeadCell $w={48} $left $pl={5}>北京</HeadCell>
                <HeadCell $w={59}>价格</HeadCell>
                <HeadCell $w={48}>√大单</HeadCell>
                <HeadCell $w={48}>仓差</HeadCell>
                <HeadCell $w={37} $left $pl={8}>性质</HeadCell>
              </Row>
            </thead>
            <tbody>
              {TICKS.map(([time, price, vol, diff, nature, side], k) => (
                <Row key={k} $h={22}>
                  {time[0] === ":" ? <Second>{time}</Second> : <Minute>{time}</Minute>}
                  <Cell $c={C.green}>{price}</Cell>
                  <Cell $c={side === "g" ? C.green : C.up}>{vol}</Cell>
                  <Cell $c={C.yellow}>{diff}</Cell>
                  <Nature $c={side === "g" ? C.green : C.up}>{nature}</Nature>
                </Row>
              ))}
            </tbody>
          </QuoteTable>
          <TabRow>
            <Tab type="button">笔</Tab>
            <TabRest />
          </TabRow>
        </QuoteColumn>
      </Workspace>
      <StatusStrip />

      <Brand>
        <BrandMark viewBox="0 0 33 34" aria-hidden="true">
          <rect y="3" width="32" height="28" rx="3" fill="#e85a1c" />
          <circle cx="16" cy="17" r="10.500" fill="none" stroke="#fff" strokeWidth="2.500" />
          <path d="M8 13H24M8 18H24M16 13V25M11 24H21" stroke="#fff" strokeWidth="2.500" fill="none" />
        </BrandMark>
        <BrandText>
          <BrandTop>5e<b>天资</b></BrandTop>
          <BrandBottom>5etz.com</BrandBottom>
        </BrandText>
      </Brand>
    </Page>
  );
}
